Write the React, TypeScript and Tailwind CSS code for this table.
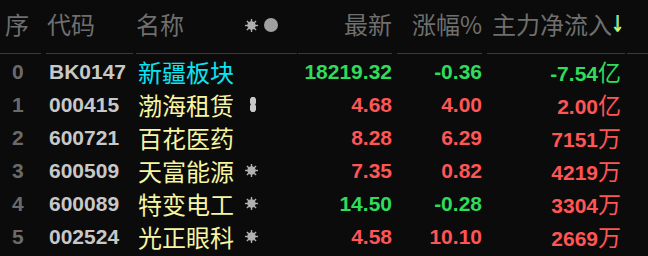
import React from 'react';

type Row = {
  seq: number;
  code: string;
  name: string;
  price: string;
  change: string;
  flow: string;
  unit: string;
  mark?: 'star' | 'pin';
};

const rows: Row[] = [
  { seq: 0, code: 'BK0147', name: '新疆板块', price: '18219.32', change: '-0.36', flow: '-7.54', unit: '亿' },
  { seq: 1, code: '000415', name: '渤海租赁', price: '4.68', change: '4.00', flow: '2.00', unit: '亿', mark: 'pin' },
  { seq: 2, code: '600721', name: '百花医药', price: '8.28', change: '6.29', flow: '7151', unit: '万' },
  { seq: 3, code: '600509', name: '天富能源', price: '7.35', change: '0.82', flow: '4219', unit: '万', mark: 'star' },
  { seq: 4, code: '600089', name: '特变电工', price: '14.50', change: '-0.28', flow: '3304', unit: '万', mark: 'star' },
  { seq: 5, code: '002524', name: '光正眼科', price: '4.58', change: '10.10', flow: '2669', unit: '万', mark: 'star' },
];

const cjk = "font-['Noto_Sans_CJK_SC',sans-serif]";
const num = "font-['Liberation_Sans',Arial,sans-serif] font-bold";

function Star() {
  const rays = [0, 45, 90, 135, 180, 225, 270, 315];
  return (
    <svg width="13" height="13" viewBox="0 0 13 13">
      <circle cx="6.5" cy="6.5" r="4.2" fill="#b0b0b0" />
      {rays.map((a) => (
        <rect key={a} x="5.8" y="0" width="1.4" height="3" fill="#b0b0b0" transform={`rotate(${a} 6.5 6.5)`} />
      ))}
    </svg>
  );
}

function Pin() {
  return (
    <svg width="8" height="15" viewBox="0 0 8 15">
      <path d="M2.5 0 H5.5 L7 2 V6 L6.2 7.5 L7 9 V13 L5.5 15 H2.5 L1 13 V9 L1.8 7.5 L1 6 V2 Z" fill="#c8c8c8" />
    </svg>
  );
}

function SortArrow() {
  return (
    <svg width="10" height="20" viewBox="0 0 10 20">
      <path d="M4 1 V17 M1 13 L4 17 L7 13" stroke="#19d8e0" strokeWidth="1.4" fill="none" />
      <path d="M5 1 V17 M2 13 L5 17 L8 13" stroke="#f0f040" strokeWidth="1.4" fill="none" />
    </svg>
  );
}

function color(v: string) {
  return v.startsWith('-') ? 'text-[#2fdc5c]' : 'text-[#ff5555]';
}

export default function App() {
  return (
    <div className="w-[648px] h-[256px] bg-[#0b0b0b] overflow-hidden">
      {/* header */}
      <div className={`flex h-[55px] text-[24px] leading-[30px] text-[#6f6f6f] ${cjk}`}>
        <div className="w-[44px] pr-[3px]">
          <div className="h-[54px] border-b border-[#3a3a3a] pt-[9px] pl-[5px]">序</div>
        </div>
        <div className="w-[92px] pl-[2px] pr-[3px]">
          <div className="h-[54px] border-b border-[#3a3a3a] pt-[9px] pl-[1px]">代码</div>
        </div>
        <div className="w-[162px] pr-[1px]">
          <div className="h-[54px] border-b border-[#3a3a3a] pt-[9px] flex items-start">
            <span>名称</span>
            <span className="ml-[61px] mt-[9px] flex items-center gap-[6px]">
              <Star />
              <span className="w-[14px] h-[14px] rounded-full bg-[#a0a0a0]" />
            </span>
          </div>
        </div>
        <div className="w-[97px] pr-[3px]">
          <div className="h-[54px] border-b border-[#3a3a3a] pt-[9px] text-right">最新</div>
        </div>
        <div className="w-[90px] pl-[2px] pr-[3px]">
          <div className="h-[54px] border-b border-[#3a3a3a] pt-[9px] text-right">涨幅%</div>
        </div>
        <div className="w-[141px] pl-[2px] pr-[1px]">
          <div className="h-[54px] border-b border-[#3a3a3a] pt-[9px] flex justify-end items-start">
            <span>主力净流入</span>
            <span className="mt-[5px] ml-[1px] mr-[2px]"><SortArrow /></span>
          </div>
        </div>
        <div className="flex-1 pl-[1px]">
          <div className="h-[54px] border-b border-[#3a3a3a]" />
        </div>
      </div>

      {/* rows */}
      {rows.map((r) => (
        <div key={r.code} className="flex h-[33px] items-center">
          <div className={`w-[44px] pl-[12px] text-[21px] text-[#6a6a6a] ${num}`}>{r.seq}</div>
          <div className={`w-[92px] pl-[5px] text-[21px] text-[#c8c8c8] ${num}`}>{r.code}</div>
          <div className="w-[162px] flex items-center">
            <span className={`pl-[2px] text-[24px] leading-[30px] ${cjk} ${r.seq === 0 ? 'text-[#0ae4f4]' : 'text-[#f6f6a4]'}`}>
              {r.name}
            </span>
            {r.mark === 'star' && <span className="ml-[11px] flex"><Star /></span>}
            {r.mark === 'pin' && <span className="ml-[15px] flex"><Pin /></span>}
          </div>
          <div className={`w-[97px] pr-[3px] text-right text-[21px] ${num} ${color(r.change)}`}>{r.price}</div>
          <div className={`w-[90px] pr-[3px] text-right text-[21px] ${num} ${color(r.change)}`}>{r.change}</div>
          <div className={`w-[141px] pr-[5px] flex justify-end items-baseline ${color(r.flow)}`}>
            <span className={`text-[21px] ${num}`}>{r.flow}</span>
            <span className={`text-[23px] ${cjk}`}>{r.unit}</span>
          </div>
        </div>
      ))}
    </div>
  );
}
